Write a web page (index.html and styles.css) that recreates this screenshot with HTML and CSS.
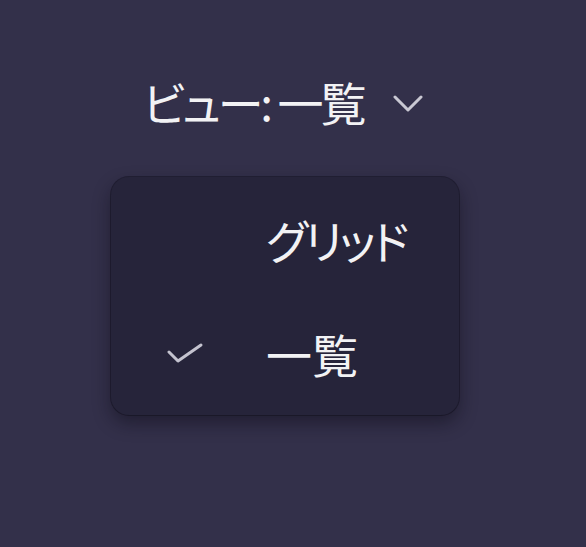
FILE: index.html
```html
<!DOCTYPE html>
<html lang="ja">
<head>
<meta charset="utf-8">
<link rel="stylesheet" href="styles.css">
</head>
<body>
<div class="wrap">
  <div class="trigger">
    <span class="label">ビュー: 一覧</span>
    <svg class="chev" width="30" height="17" viewBox="0 0 30 17"><path d="M2 2 L15 15 L28 2" fill="none" stroke="#c9c8d3" stroke-width="3" stroke-linecap="round" stroke-linejoin="round"/></svg>
  </div>
  <div class="menu">
    <div class="item">
      <span class="check"></span>
      <span class="text narrow">グリッド</span>
    </div>
    <div class="item">
      <span class="check"><svg width="36" height="20" viewBox="0 0 36 20"><path d="M2 9 L11 18 L34 2" fill="none" stroke="#c4c3cf" stroke-width="3" stroke-linecap="round" stroke-linejoin="round"/></svg></span>
      <span class="text">一覧</span>
    </div>
  </div>
</div>
</body>
</html>
```

FILE: styles.css
```css
html, body {
  margin: 0;
  padding: 0;
  background: #33304a;
  height: 100%;
}
body {
  font-family: "Noto Sans CJK JP", "Noto Sans", sans-serif;
  font-feature-settings: "palt";
  color: #f2f2f4;
}
.wrap {
  padding-top: 70px;
  padding-left: 111px;
}
.trigger {
  display: flex;
  align-items: center;
  margin-left: 32px;
  height: 62px;
}
.label {
  font-size: 46px;
  line-height: 1;
  letter-spacing: -3px;
}
.chev {
  margin-left: 30px;
  margin-top: 4px;
}
.menu {
  margin-top: 45px;
  width: 348px;
  height: 238px;
  box-sizing: border-box;
  padding: 5px 0;
  background: #26243a;
  border-radius: 18px;
  box-shadow: 0 8px 18px rgba(10, 8, 20, 0.45), 0 0 0 1px rgba(20, 18, 32, 0.5);
  display: flex;
  flex-direction: column;
}
.item {
  height: 114px;
  display: flex;
  align-items: center;
  padding-left: 56px;
}
.check {
  width: 99px;
  display: flex;
  align-items: center;
}
.text {
  font-size: 46px;
  line-height: 1;
}
.narrow {
  letter-spacing: -3px;
}
```
